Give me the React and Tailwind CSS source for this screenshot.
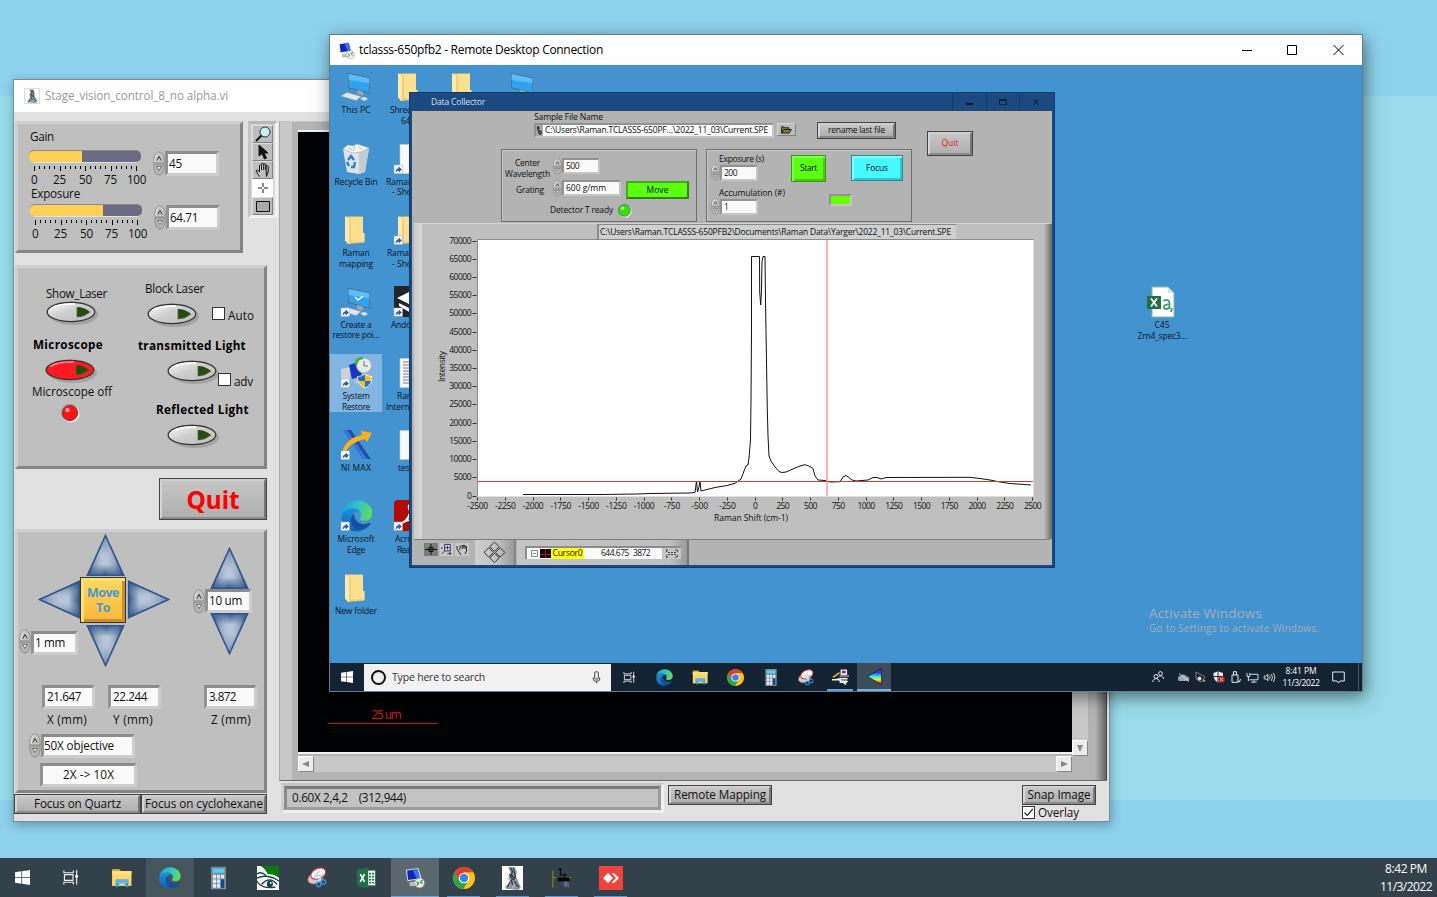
import React, { useLayoutEffect, useRef } from "react";

/* Text set to a known advance width: the tracking is computed from the natural width. */
function T({ w, className = "", children }) {
  const ref = useRef(null);
  useLayoutEffect(() => {
    const el = ref.current;
    el.style.letterSpacing = "0px";
    const n = String(children).length;
    const natural = el.getBoundingClientRect().width;
    el.style.letterSpacing = (w - natural) / n + "px";
  }, [w, children]);
  return (
    <span className={"block shrink-0 " + className}>
      <span ref={ref} className="inline-block whitespace-pre">
        {children}
      </span>
    </span>
  );
}

/* ---------- LabVIEW style controls ---------- */

const Panel = ({ className = "", children }) => (
  <div className={"shrink-0 border-[3px] border-b-[#858585] border-l-[#d0d0d0] border-r-[#858585] border-t-[#d0d0d0] bg-[#bfbfbf] " + className}>
    {children}
  </div>
);

const Field = ({ className = "", children }) => (
  <div className={"flex shrink-0 items-center border-[3px] border-b-[#cdcdcd] border-l-[#929292] border-r-[#cdcdcd] border-t-[#8c8c8c] bg-[#fafafa] " + className}>
    {children}
  </div>
);

const Button = ({ className = "", children }) => (
  <div className={"shrink-0 border border-[#444] bg-[#444] " + className}>
    <div className="flex h-full items-center justify-center border-2 border-b-[#8a8a8a] border-l-[#d6d6d6] border-r-[#777] border-t-[#cfcfcf] bg-linear-to-b from-[#c6c6c6] to-[#b0b0b0]">
      {children}
    </div>
  </div>
);

const Spinner = ({ className = "h-[25px] w-[12px]" }) => (
  <svg viewBox="0 0 12 25" preserveAspectRatio="none" className={"shrink-0 " + className}>
    <path d="M.8 12C.8 5 2.5 1 6 1s5.200 4 5.200 11z" fill="#c4c4c4" stroke="#8a8a8a" />
    <path d="M.8 13.200h10.400C11.200 20 9.500 24 6 24S.8 20 .8 13.200z" fill="#b4b4b4" stroke="#8a8a8a" />
    <path d="M2 11C2 6 3 2.500 5.500 2" fill="none" stroke="#eee" />
    <path d="M3.800 9.500L6 5.500l2.200 4" fill="none" stroke="#333" />
    <path d="M3.500 15.500h5L6 19.500z" fill="#eee" stroke="#555" strokeWidth=".8" />
  </svg>
);

const Switch = ({ red, className = "" }) => (
  <svg viewBox="0 0 54 26" className={"h-[26px] w-[54px] shrink-0 " + className}>
    <defs>
      <linearGradient id="swg" x1="0" y1="0" x2="1" y2="1">
        <stop offset="0" stopColor="#fff" />
        <stop offset=".45" stopColor="#cfcfcf" />
        <stop offset="1" stopColor="#bcbcbc" />
      </linearGradient>
    </defs>
    <ellipse cx="28.500" cy="14.500" rx="24.500" ry="10.500" fill="#9c9c9c" opacity=".8" />
    <ellipse cx="26" cy="12" rx="25" ry="10.800" fill="#a4a4a4" />
    <ellipse cx="26" cy="12" rx="23.800" ry="9.600" fill={red ? "#ff1a22" : "url(#swg)"} stroke="#333" strokeWidth="1.200" />
    <path d="M6 8.500C12 4.500 20 3.800 30 4" fill="none" stroke={red ? "#ff8a8a" : "#fff"} strokeWidth="1.500" />
    <path d="M32 7q7 0 13 5q-6 5-13 5z" fill="#264a12" />
    <path d="M32 7v10M45 12q-6 5-13 5" fill="none" stroke="#4c6e30" strokeWidth=".8" />
  </svg>
);

const Led = ({ color, rim, className }) => (
  <svg viewBox="0 0 20 20" className={"shrink-0 " + className}>
    <circle cx="11" cy="11" r="8.500" fill="#ececec" />
    <circle cx="9.500" cy="9.500" r="8.500" fill="#999" />
    <circle cx="10" cy="10" r="7.500" fill={color} stroke={rim} />
    <circle cx="7.500" cy="7" r="2.200" fill="#fff" opacity=".6" />
  </svg>
);

const Check = ({ on, className = "" }) => (
  <div className={"h-[13px] w-[13px] shrink-0 border border-[#333] bg-white " + className}>
    {on && (
      <svg viewBox="0 0 11 11" className="h-[11px] w-[11px]">
        <path d="M1.500 5.500l2.800 2.800L9.800 2" fill="none" stroke="#222" strokeWidth="1.200" />
      </svg>
    )}
  </div>
);

const TriArrow = ({ dir, className = "" }) => {
  const rot = { up: "", right: "rotate-90", down: "rotate-180", left: "-rotate-90" }[dir];
  return (
    <svg viewBox="0 0 39 43" className={"h-[43px] w-[39px] shrink-0 " + rot + " " + className}>
      <defs>
        <linearGradient id="ta" x1="0" y1="0" x2="0" y2="1">
          <stop offset="0" stopColor="#6f89b0" />
          <stop offset=".5" stopColor="#b7c5d8" />
          <stop offset=".72" stopColor="#bac8da" />
          <stop offset="1" stopColor="#24487e" />
        </linearGradient>
        <linearGradient id="tb" x1="0" y1="0" x2="1" y2="0">
          <stop offset="0" stopColor="#24487e" />
          <stop offset=".48" stopColor="#b7c5d8" stopOpacity="0" />
          <stop offset="1" stopColor="#24487e" />
        </linearGradient>
      </defs>
      <path d="M19.500 0L38.500 42H.5z" fill="url(#ta)" />
      <path d="M19.500 0L38.500 42H.5z" fill="url(#tb)" />
      <path d="M19.500 1.500L37.500 41.300H1.500z" fill="none" stroke="#33558b" strokeWidth="1.600" />
    </svg>
  );
};

const Slider = ({ fill }) => (
  <div className="w-[112px] shrink-0">
    <div className="h-[13px] overflow-hidden rounded-[5px] border-b border-t border-b-[#e2e2e2] border-t-[#8a8a8a] bg-[#6b6b83]">
      <div className={"h-full bg-[#ffd055] " + fill} />
    </div>
    <svg viewBox="0 0 112 6" className="mt-[3px] h-[6px] w-[112px]">
      {Array.from({ length: 21 }, (_, i) => (
        <path key={i} d={`M${5.5 + Math.round(i * 5.1)} 0v${i % 5 ? 3 : 5}`} stroke="#000" />
      ))}
    </svg>
    <div className="-mt-px flex h-[17px] w-[116px] items-center text-[#111]">
      <T w={7} className="ml-[2px] w-[22px]">0</T>
      <T w={13} className="w-[26px]">25</T>
      <T w={13} className="w-[25px]">50</T>
      <T w={13} className="w-[23px]">75</T>
      <T w={19}>100</T>
    </div>
  </div>
);

/* ---------- icons ---------- */

const WinLogo = ({ className }) => (
  <svg viewBox="0 0 16 16" className={className} fill="#fff">
    <path d="M0 2.400L6.800 1.400v6.200H0zM7.600 1.300L16 .1v7.500H7.600zM0 8.400h6.800v6.200L0 13.600zM7.600 8.400H16v7.500l-8.400-1.200z" />
  </svg>
);
const TaskView = ({ className }) => (
  <svg viewBox="0 0 18 18" className={className} fill="none" stroke="#eee" strokeWidth="1.200">
    <path d="M2 1.500v2.500h10V1.500M2 16.500V14h10v2.500M2.600 6h9v6h-9zM15.500 1v15.500" />
    <path d="M14 6.500h3v2.500h-3z" fill="#fff" stroke="none" />
  </svg>
);
const Folder = ({ className }) => (
  <svg viewBox="0 0 20 20" className={className}>
    <path d="M1 2h7l2 2.500h-9z" fill="#e2a422" />
    <path d="M1 3.800h18.500V18H1z" fill="#fdd663" />
    <path d="M1 3.800h18.500v3H1z" fill="#ffe08a" />
    <path d="M4.500 19v-7h12v7h-3v-3.500h-6V19z" fill="#3c97dd" />
    <path d="M4.500 12h12v3.500h-12z" fill="#56b4ee" />
  </svg>
);
const Edge = ({ className }) => (
  <svg viewBox="0 0 24 24" className={className}>
    <defs>
      <linearGradient id="eg1" x1="0" y1=".2" x2="1" y2=".4">
        <stop offset="0" stopColor="#1ba0e0" />
        <stop offset=".55" stopColor="#33c6c4" />
        <stop offset="1" stopColor="#5fdc5a" />
      </linearGradient>
      <linearGradient id="eg2" x1="0" y1="0" x2="0" y2="1">
        <stop offset="0" stopColor="#1b8fdc" />
        <stop offset="1" stopColor="#0f62b8" />
      </linearGradient>
    </defs>
    <path d="M.5 11C1 4.500 6 .4 12 .4 19 .4 23.600 5.300 23.600 10c0 3.600-2.800 5.600-5.800 5.600-2.200 0-3.700-.8-3.700-1.800 0-.8 1-1.200 1-2.900 0-2.200-2.200-4.500-6-4.500C4.500 6.400 1.500 9 .5 11z" fill="url(#eg1)" />
    <path d="M.4 12.500C.9 9 4.500 6.400 9 6.400c2.500 0 4.400 1 5.300 2.300-4-1.200-7 1.600-7 5.500 0 5 4 8.800 8.200 8.500-1.200.6-2.400.9-3.700.9C5 23.600-.2 18.600.4 12.500z" fill="url(#eg2)" />
    <path d="M9.600 10.300c-1.400 1.200-2.300 2.800-2.300 4.600 0 4.500 3.400 8.100 8 7.800 3-.6 5.500-2.700 6.700-4.700.4-.6-.2-1-.8-.7-4.600 2.100-11 .4-11.600-7z" fill="#13509e" />
  </svg>
);
const Calc = ({ className }) => (
  <svg viewBox="0 0 16 24" className={className}>
    <path d="M0 0h16v24H0z" fill="#7b8a94" />
    <path d="M2 2h12v4.500H2z" fill="#4fd0f5" />
    <path d="M2 8.500h3.300v4H2zM6.300 8.500h3.300v4H6.300zM10.700 8.500H14v4h-3.300zM2 13.500h3.300v4H2zM6.300 13.500h3.300v4H6.300zM2 18.500h3.300v4H2zM6.300 18.500h3.300v4H6.300z" fill="#e3eaf0" />
    <path d="M10.700 13.500H14v9h-3.300z" fill="#0b4a96" />
  </svg>
);
const Snip = ({ className }) => (
  <svg viewBox="0 0 24 24" className={className}>
    <ellipse cx="11" cy="12.500" rx="9.500" ry="6.500" transform="rotate(-25 11 12.500)" fill="#c9cdd2" stroke="#a83a3a" />
    <ellipse cx="14" cy="7.500" rx="9" ry="5.800" transform="rotate(-25 14 7.500)" fill="#fafafa" stroke="#c23a3a" strokeWidth="1.300" />
    <path d="M9 12l7-8M12 10l10-1" stroke="#aaa" />
    <path d="M10 9.500l8 7M17 9l-1.500 8" stroke="#cfd6dc" strokeWidth="1.500" />
    <circle cx="14.500" cy="20" r="2.500" fill="none" stroke="#2d8fd5" strokeWidth="1.600" />
    <circle cx="20" cy="17" r="2.500" fill="none" stroke="#2d8fd5" strokeWidth="1.600" />
  </svg>
);
const Chrome = ({ className }) => (
  <svg viewBox="0 0 24 24" className={className}>
    <circle cx="12" cy="12" r="11.800" fill="#fbc116" />
    <path d="M1.800 6.100A11.800 11.800 0 0 1 22.200 6.100H12L7 15z" fill="#e33b2e" />
    <path d="M1.800 6.100A11.800 11.800 0 0 0 11.500 23.800L17 15l-10 0z" fill="#2ca24c" />
    <path d="M22.200 6.100H12l5.100 8.900-5.600 8.800A11.800 11.800 0 0 0 22.200 6.100z" fill="#fbc116" />
    <circle cx="12" cy="12" r="5.800" fill="#fff" />
    <circle cx="12" cy="12" r="4.600" fill="#3f7fe8" />
  </svg>
);
const Rdp = ({ className }) => (
  <svg viewBox="0 0 24 24" className={className}>
    <path d="M1 2l15-2 4 13-17 3z" fill="#d9dde2" />
    <path d="M2.500 3l12.500-1.600 2.800 10.800-14 2.300z" fill="#0f27b4" />
    <path d="M9 2.200l6-.8 2.800 10.800-4 .7z" fill="#3b6df0" />
    <path d="M5 17l10-1 3 5-12 1z" fill="#b9bec4" />
    <circle cx="17.500" cy="18" r="5.800" fill="#e8eee6" stroke="#9aa39a" strokeWidth=".7" />
    <path d="M14 16.500l2.500 2-2.500 2.500M21 14.500l-2.500 2 2.500 2.500" fill="none" stroke="#1f8a2f" strokeWidth="1.300" />
  </svg>
);
const Scope = ({ className }) => (
  <svg viewBox="0 0 20 24" preserveAspectRatio="none" className={className}>
    <path d="M0 0h20v24H0z" fill="#fff" />
    <path d="M6 1l6 0 2 4-1 5 2 4 3 8-3 2-7-1-4 0-1-2 5-5-2-5 2-4z" fill="#8b96a0" />
    <path d="M8 2l2 3-1 4 3 3M11 2l1 5 1 3-2 4M7 8l3 5-3 4-2 4M12 15l2 4 2 2M9 14l1 5" stroke="#2a3238" strokeWidth="1.100" fill="none" />
    <path d="M5 12l3 4M13 3l1 5M12 18l-2 4" stroke="#b4c4d0" />
  </svg>
);
const Excel = ({ className }) => (
  <svg viewBox="0 0 22 24" className={className}>
    <path d="M10 3h11.500v18H10z" fill="#fff" stroke="#1f7244" />
    <path d="M14 6h2.500v2H14zM17.500 6H20v2h-2.500zM14 9.500h2.500v2H14zM17.500 9.500H20v2h-2.500zM14 13h2.500v2H14zM17.500 13H20v2h-2.500zM14 16.500h2.500v2H14zM17.500 16.500H20v2h-2.500z" fill="#1f7244" />
    <path d="M0 2.500L13 0v24L0 21.500z" fill="#1f7244" />
    <path d="M3.800 7.500l5 9M8.800 7.500l-5 9" stroke="#fff" strokeWidth="1.900" />
  </svg>
);
const EyeApp = ({ className }) => (
  <svg viewBox="0 0 24 24" preserveAspectRatio="none" className={className}>
    <path d="M0 0h24v24H0z" fill="#fff" />
    <path d="M4 0h20v12C20 8.500 15 7.500 12 8.500 10 5 8 2 4 0z" fill="#0a7a0a" />
    <path d="M0 8c3-2 7-1 10 1.500M0 12c7-3 17-2 24 3M5 18.500c5-6 12-6 17 0M0 15c2 5 10 8 20 6" fill="none" stroke="#16434a" strokeWidth="1.400" />
    <circle cx="14" cy="18" r="3.300" fill="#16434a" />
    <circle cx="15" cy="17" r="1" fill="#fff" />
  </svg>
);
const ProbeApp = ({ className }) => (
  <svg viewBox="0 0 24 24" className={className}>
    <path d="M1 4v20M1 12h4M17 12h6" stroke="#80801a" strokeWidth="1.500" />
    <path d="M10 1v8h7M8.500 3L10 .8 11.500 3M15 7.500L17 9l-2 1.500" fill="none" stroke="#000" strokeWidth="1.200" />
    <path d="M7 12h14v4.500H7z" fill="#000" />
    <path d="M13 17v5" stroke="#7a1fd0" strokeWidth="1.500" />
    <path d="M15.500 17v6" stroke="#2f8fe0" strokeWidth="1.500" />
    <path d="M17.500 17v6" stroke="#18c040" strokeWidth="1.500" />
    <path d="M19.500 17v7" stroke="#e0209a" strokeWidth="1.500" />
  </svg>
);
const AnyDesk = ({ className }) => (
  <svg viewBox="0 0 24 24" className={className}>
    <path d="M0 0h24v24H0z" fill="#ef443b" />
    <path d="M9 7l5 5-5 5-5-5zM12.500 7L15 7l5 5-5 5h-2.500l4.500-5z" fill="#fff" />
  </svg>
);

/* desktop icons, all on a 32 x 32 grid */
const Shortcut = () => (
  <g>
    <path d="M1 22h8.500v8.500H1z" fill="#fff" stroke="#9ab" strokeWidth=".5" />
    <path d="M3 29c0-2.500 1-3.500 3-3.500V24l2.500 2.500L6 29v-1.500c-1.300 0-2 .3-3 1.500z" fill="#2a5db0" stroke="#2a5db0" strokeWidth=".6" />
  </g>
);
const DIcon = ({ kind, link }) => (
  <svg viewBox="0 0 32 32" className="h-[32px] w-[32px]">
    {kind === "pc" && (
      <g>
        <path d="M8 2l22 4.500v16L8 17z" fill="#5a6670" />
        <path d="M8.700 3l20.600 4.200v14.300L8.700 16.300z" fill="#2fa3f2" />
        <path d="M8.700 3l20.600 4.200v5L8.700 9z" fill="#5cbcfa" />
        <path d="M17 19l6 1.500v4l-6-1.500z" fill="#9aa6b0" />
        <path d="M1 25l6-3.500 14 4-5 4z" fill="#e3e7ea" stroke="#9aa6b0" strokeWidth=".6" />
        <path d="M20 27l5-1 3 2-4 2z" fill="#e3e7ea" />
        {link && <path d="M15 11l3 3 5-4" fill="none" stroke="#fff" strokeWidth="1.500" />}
      </g>
    )}
    {kind === "bin" && (
      <g>
        <path d="M3 6l26-1-4 24-6 2-12-2z" fill="#dde3e8" />
        <path d="M19 8l10-3-4 24-6 2z" fill="#c3ccd4" />
        <path d="M3 6l5-4 5 1 4-2 6 2 6 2-8 4-8 1z" fill="#f5f7f8" stroke="#a9b2ba" strokeWidth=".7" />
        <path d="M8 5l4 2M15 3l-2 5M19 4l3 3" stroke="#a9b2ba" />
        <path d="M8 17l3-4 3 4M15 19l-1 5h-3M9 23l-2-4" fill="none" stroke="#1f80d4" strokeWidth="2.300" />
      </g>
    )}
    {kind === "folder" && (
      <g>
        <path d="M5 2.500h18v17h1.500v9L7 30z" fill="#f3cf6c" />
        <path d="M10 3h13v16h1.500v8.500H10z" fill="#fbe08f" />
        <path d="M5 2.500l5 2.500v25l-5-3z" fill="#fbe9ae" />
        <path d="M10 5v24" stroke="#dcb24c" strokeWidth=".8" />
      </g>
    )}
    {kind === "doc" && <path d="M7 1.500h22v29H7z" fill="#f9f9fb" stroke="#c5ccd4" strokeWidth=".6" />}
    {kind === "lines" && (
      <g>
        <path d="M7 1.500h22v29H7z" fill="#f9f9fb" stroke="#c5ccd4" strokeWidth=".6" />
        <path d="M10 5h16M10 8h16M10 11h16M10 14h16M10 17h16M10 20h16M10 23h16M10 26h16" stroke="#777" />
      </g>
    )}
    {kind === "andor" && (
      <g>
        <path d="M1 0h31v31H1z" fill="#23242c" />
        <path d="M4 12L18 5l14 6-14 8zM6 17l12 6 14-6v3l-14 7L6 20z" fill="#fff" />
      </g>
    )}
    {kind === "acro" && (
      <g>
        <rect x="1" y="0" width="31" height="31" rx="4" fill="#b30b00" />
        <path d="M9 23c5-2 9-9 9-16 0-3-3-3-2 1 1 6 6 11 12 11-6-1-14 1-19 4z" fill="none" stroke="#fff" strokeWidth="2" />
      </g>
    )}
    {kind === "restore" && (
      <g>
        <path d="M1 12l9-2v14l-9-3z" fill="#cdd3d8" />
        <path d="M9 8l9-3 4 14-10 3z" fill="#1736c4" />
        <path d="M13 23l8-2 3 4-9 2z" fill="#b9c0c8" />
        <circle cx="24" cy="8.500" r="7.500" fill="#e7ece8" stroke="#aab" />
        <path d="M24 4v5h4" fill="none" stroke="#777" />
        <path d="M16 8c0-5 3-7 7-7" fill="none" stroke="#35b535" strokeWidth="2.500" />
        <path d="M25 17v7h-7c-.5-1.500-.5-3-.5-4.500 3 0 5-1 7.500-2.500zM25 24h6.500c-1 3-3 5-6.500 7z" fill="#1f6fd0" />
        <path d="M25 17c2.500 1.500 4.500 2.500 7 2.500 0 1.500 0 3-.5 4.500H25zM18 24h7v7c-3.500-1.500-6-4-7-7z" fill="#f7c21e" />
        <path d="M25 17c-2.500 1.500-4.500 2.500-7.500 2.500 0 6 2.500 9 7.500 11.500 5-2.500 7-5.500 7-11.500-2.500 0-4.500-1-7-2.500z" fill="none" stroke="#fff" strokeWidth=".8" />
      </g>
    )}
    {kind === "nimax" && (
      <g>
        <path d="M3 1h8l20 29h-8z" fill="#1e4fb0" />
        <path d="M3 1h4l20 29h-4z" fill="#3c74d8" />
        <path d="M2 23C5 13 12 8 22 6l-1-4 11 2-5 9-2-3C16 12 9 16 5 24z" fill="#fbb11a" />
      </g>
    )}
    {kind === "csv" && (
      <g>
        <path d="M6 1h16l6 6v24H6z" fill="#fff" stroke="#7dbb98" />
        <path d="M22 1v6h6z" fill="#cfe5d8" />
        <path d="M1 10h14v13H1z" fill="#1f7244" />
        <path d="M5 12.500l6 8M11 12.500l-6 8" stroke="#fff" strokeWidth="1.800" />
        <path d="M17.500 15c3-2 6-1 6 2v6M23.500 18.500c-7-.5-7 4.500-3.500 4.500 2 0 3.500-1.500 3.500-3M26 22l-1 4" fill="none" stroke="#3fa06a" strokeWidth="1.800" />
      </g>
    )}
    {link && <Shortcut />}
  </svg>
);

const DesktopCell = ({ icon, lines, selected }) => (
  <div className={"flex h-[58px] w-[52px] shrink-0 flex-col items-center " + (selected ? "bg-[#83b5e2]" : "")}>
    <div className="flex h-[37px] shrink-0 items-center pt-px">{icon}</div>
    <div className="flex flex-col items-center text-[8.500px] leading-[10.500px] text-[#0c1420]">
      {lines.map(([t, w], i) => (
        <T key={i} w={w}>{t}</T>
      ))}
    </div>
  </div>
);

const EdgeDesktop = () => (
  <svg viewBox="0 0 32 32" className="h-[32px] w-[32px]">
    <svg x="0" y="0" width="34" height="32" viewBox="0 0 24 24">
      <Edge />
    </svg>
    <Shortcut />
  </svg>
);

const HalfCell = ({ icon, l1, l2 }) => (
  <div className="h-[71.570px] w-[50px] shrink-0 overflow-hidden">
    <div className="flex h-[37px] shrink-0 items-center pl-[7px] pt-px">{icon}</div>
    <div className="flex flex-col text-[8.500px] leading-[10.500px] text-[#0c1420]">
      {l1}
      {l2}
    </div>
  </div>
);

/* ---------- spectrum chart ---------- */

const CURVE =
  "523,494.500 600,494.500 637,494 650,493.500 690,493 695,492.500 696.500,481 697.500,492 699,487 700,481 701,491 715,487.500 727,485.500 735,483.300 741,479 744,471 746,466 748,465 749,458 750.500,440 751,400 751.500,330 751.500,256.500 759.500,256.500 759.700,292 760.700,305 761.500,290 762,262 763,256.500 765,256.500 765.500,300 766.500,362 767.300,410 768,436 769,456 771,461 775,467 779,471.500 782,472.500 786,472 795,468 800,466 805,464.700 810,466.500 813,468.500 815,476 818,480 825,480.500 830,482 840,481.700 843,477 846,475.500 849,477.500 852,480 856,481 868,480 873,477.500 877,477.500 881,479 886,477.500 970,477.300 980,478.500 990,480 1000,482 1010,483.500 1031,485";

const Chart = () => (
  <svg viewBox="430 239 614 288" className="block h-[288px] w-[614px] overflow-visible font-['Open_Sans',sans-serif]" fontSize="8.500" fill="#111">
    <path d="M477.500 239.500h556v257h-556z" fill="#fff" />
    <path d="M477.500 496V239.500h556" fill="none" stroke="#8a8a8a" />
    {Array.from({ length: 15 }, (_, i) => {
      const y = 495.5 - i * 18.214;
      const label = String(i * 5000);
      return (
        <g key={i}>
          <text x={471.5 - label.length * 4.45} y={y + 3} textLength={label.length * 4.45}>{label}</text>
          <path d={`M472.500 ${Math.round(y) + 0.5}h4`} stroke="#333" />
        </g>
      );
    })}
    {Array.from({ length: 21 }, (_, i) => {
      const x = 477.7 + i * 27.75;
      const label = String(-2500 + i * 250);
      const w = label.length * 4.4 - (label[0] === "-" ? 1 : 0);
      return (
        <g key={i}>
          <text x={x - w / 2} y="508.8" textLength={w}>{label}</text>
          <path d={`M${Math.floor(x) + 0.5} 497.500v3`} stroke="#333" />
        </g>
      );
    })}
    <text x="714" y="520.800" textLength="74">Raman Shift (cm-1)</text>
    <text transform="translate(445 382) rotate(-90)" textLength="31">Intensity</text>
    <polyline points={CURVE} fill="none" stroke="#111" strokeWidth="1" />
    <path d="M827 240v256" stroke="#ffb0b0" strokeWidth="2" />
    <path d="M478 481h555v1h-555z" fill="#c23c3c" />
  </svg>
);

/* ---------- Data Collector window ---------- */

const SmallField = ({ className = "", children }) => (
  <div className={"flex shrink-0 items-center border-2 border-b-[#c6c6c6] border-l-[#929292] border-r-[#c6c6c6] border-t-[#929292] bg-[#fafafa] pl-[2px] " + className}>
    {children}
  </div>
);
const SmallSpin = () => <Spinner className="h-[17px] w-[9px]" />;

const DataCollector = () => (
  <div className="absolute left-[79px] top-[57px] flex h-[476px] w-[646px] flex-col border border-[#123a68] bg-[#1c4a80] font-['Open_Sans',sans-serif] text-[8.500px] text-[#111]">
    <div className="flex h-[18px] shrink-0 items-center pl-[21px] text-[#cfe0f0]">
      <T w={54} className="w-[521px]">Data Collector</T>
      <div className="flex h-full w-[34px] items-center justify-center border-l border-[#143a66]">
        <div className="mt-[3px] h-[2px] w-[7px] bg-[#06121f]" />
      </div>
      <div className="flex h-full w-[33px] items-center justify-center border-l border-[#143a66]">
        <div className="h-[6px] w-[8px] border border-t-2 border-[#0b2340]" />
      </div>
      <div className="flex h-full w-[33px] items-center justify-center border-l border-[#143a66]">
        <svg viewBox="0 0 7 7" className="h-[6px] w-[6px]"><path d="M.5.5l6 6M6.500.5l-6 6" stroke="#0b2340" strokeWidth="1.300" /></svg>
      </div>
    </div>
    <div className="mx-[2px] mb-[2px] flex min-h-0 flex-1 flex-col bg-[#b3b3b3]">
      <div className="flex h-[112px] shrink-0">
        <div className="w-[500px] shrink-0">
          <div className="flex h-[38px]">
            <div className="ml-[122px] w-[240px]">
              <T w={69} className="h-[12px] leading-[12px]">Sample File Name</T>
              <div className="flex h-[15px] items-center border-2 border-b-[#c6c6c6] border-l-[#929292] border-r-[#c6c6c6] border-t-[#929292] bg-[#fafafa]">
                <div className="flex h-full w-[7px] items-center justify-center bg-[#a8a8a8]">
                  <svg viewBox="0 0 5 9" className="h-[9px] w-[5px]"><path d="M1 0v5h3v3H2V5M0 2h3" fill="none" stroke="#111" /></svg>
                </div>
                <T w={223} className="ml-[2px]">C:\Users\Raman.TCLASSS-650PF...\2022_11_03\Current.SPE</T>
              </div>
            </div>
            <div className="ml-[3px] mt-[12px] flex h-[13px] w-[19px] items-center justify-center border border-b-[#808080] border-l-[#d8d8d8] border-r-[#808080] border-t-[#d8d8d8] bg-[#bcbcbc]">
              <svg viewBox="0 0 12 9" className="h-[8px] w-[11px]"><path d="M.5 8V1h3l1 1h4v2M.5 8l2.500-4h8.500L9 8z" fill="#8a8420" stroke="#111" /></svg>
            </div>
            <div className="ml-[21px] mt-[11px]">
              <Button className="h-[17px] w-[79px]"><T w={57}>rename last file</T></Button>
            </div>
          </div>
          <div className="ml-[89px] flex h-[73px]">
            <div className="w-[196px] border border-[#6e6e6e] pt-[8px] shadow-[inset_1px_1px_0_#c8c8c8]">
              <div className="flex h-[22px] items-start">
                <div className="w-[51px] text-center leading-[10.500px]">
                  <T w={25}>Center</T>
                  <T w={45}>Wavelength</T>
                </div>
                <SmallSpin />
                <SmallField className="h-[16px] w-[38px]"><T w={13}>500</T></SmallField>
              </div>
              <div className="flex h-[22px] items-start">
                <T w={28} className="ml-[14px] mt-[4px] w-[37px]">Grating</T>
                <SmallSpin />
                <SmallField className="h-[16px] w-[59px]"><T w={40}>600 g/mm</T></SmallField>
                <div className="ml-[5px] mt-[1px] flex h-[18px] w-[63px] items-center justify-center border-2 border-b-[#2a8a08] border-l-[#44a820] border-r-[#2a8a08] border-t-[#44a820] bg-[#5cff10]">
                  <T w={22}>Move</T>
                </div>
              </div>
              <div className="flex h-[16px] items-center">
                <T w={63} className="ml-[48px]">Detector T ready</T>
                <Led color="#3be010" rim="#2aa00c" className="ml-[4px] h-[15px] w-[15px]" />
              </div>
            </div>
            <div className="ml-[9px] flex w-[206px] border border-[#6e6e6e] pl-[4px] shadow-[inset_1px_1px_0_#c8c8c8]">
              <div className="w-[78px] pt-[3px]">
                <T w={45} className="ml-[8px] h-[11px] leading-[11px]">Exposure (s)</T>
                <div className="flex">
                  <SmallSpin />
                  <SmallField className="mt-px h-[16px] w-[38px]"><T w={13}>200</T></SmallField>
                </div>
                <T w={66} className="ml-[8px] mt-[6px] h-[11px] leading-[11px]">Accumulation (#)</T>
                <div className="flex">
                  <SmallSpin />
                  <SmallField className="mt-px h-[16px] w-[38px]"><T w={4}>1</T></SmallField>
                </div>
              </div>
              <div className="ml-[2px] pt-[5px]">
                <div className="flex">
                  <div className="flex h-[27px] w-[35px] items-center justify-center border border-[#3a9a18] bg-[#5cff10] shadow-[inset_2px_2px_0_#7cff48,inset_-2px_-2px_0_#46c818]">
                    <T w={17}>Start</T>
                  </div>
                  <div className="ml-[25px] flex h-[26px] w-[52px] items-center justify-center border border-[#2a8a94] bg-[#48f8ff] shadow-[inset_2px_2px_0_#84fcff,inset_-2px_-2px_0_#30c4cc]">
                    <T w={22}>Focus</T>
                  </div>
                </div>
                <div className="ml-[38px] mt-[12px] h-[12px] w-[23px] border-2 border-b-[#c6c6c6] border-l-[#929292] border-r-[#c6c6c6] border-t-[#929292] bg-[#66ff00]" />
              </div>
            </div>
          </div>
        </div>
        <Button className="ml-[15px] mt-[20px] h-[25px] w-[46px]"><T w={17} className="text-[#d82020]">Quit</T></Button>
      </div>
      <div className="mx-[2px] flex h-[317px] shrink-0 border-b border-t border-b-[#7c7c7c] border-t-[#d4d4d4] bg-[#bfbfbf]">
        <div className="w-[8px] shrink-0 bg-linear-to-r from-[#cacaca] to-[#d8d8d8]" />
        <div className="ml-[8px] w-[614px]">
          <div className="ml-[167px] flex h-[15px] w-[359px] items-center border-l-2 border-t border-[#8a8a8a] bg-[#d0d0d0] pl-px">
            <T w={351}>C:\Users\Raman.TCLASSS-650PFB2\Documents\Raman Data\Yarger\2022_11_03\Current.SPE</T>
          </div>
          <Chart />
        </div>
        <div className="ml-auto w-[8px] shrink-0 bg-linear-to-r from-[#bfbfbf] to-[#6a6a6a]" />
      </div>
      <div className="flex min-h-0 flex-1">
        <div className="flex w-[63px] items-start gap-[2px] pl-[12px] pt-[3px]">
          <svg viewBox="0 0 14 13" className="h-[13px] w-[14px] bg-[#7a7a7a]"><path d="M7 1v11M1 6.500h12M5 4.500h4v4H5z" fill="none" stroke="#111" /><path d="M2 2h2" stroke="#3d3" /></svg>
          <svg viewBox="0 0 14 13" className="h-[13px] w-[13px] bg-[#c8c8c8]"><path d="M5 1h6v7H5z" fill="#dde" stroke="#224" /><path d="M5 8L2 11M8 2.500v4M6 4.500h4M8 11h4M11 9v3M2 4v2" stroke="#224" /></svg>
          <svg viewBox="0 0 14 13" className="h-[13px] w-[14px] bg-[#c8c8c8]"><path d="M2 3v3l4 6M5 7V2.500M7 5V2.500h1V6M8 2.500h2V6M10 3.500h1.500V8L10 11" fill="none" stroke="#222" /></svg>
        </div>
        <div className="flex w-[41px] justify-center border-r-2 border-[#858585] bg-linear-to-r from-[#cfcfcf] via-[#bfbfbf] via-60% to-[#999]">
          <svg viewBox="0 0 23 23" className="mt-px h-[23px] w-[23px]" fill="none" stroke="#333">
            <path d="M11.500 1l4.700 4.700-4.700 4.700-4.700-4.700zM11.500 12.200l4.700 4.700-4.700 4.700-4.700-4.700zM5.800 6.700l4.700 4.700-4.700 4.700L1 11.400zM17.200 6.700l4.700 4.700-4.700 4.700-4.700-4.700z" />
          </svg>
        </div>
        <div className="ml-px w-[172px] border-r-2 border-[#777] bg-linear-to-r from-[#c4c4c4] via-[#bfbfbf] via-90% to-[#999] pl-[8px] pt-[6px]">
          <div className="flex h-[13px] w-[156px] items-center border-l-2 border-t-2 border-[#8c8c8c] bg-[#fafafa]">
            <svg viewBox="0 0 7 7" className="ml-[4px] h-[7px] w-[7px] shrink-0"><path d="M.5.5h6v6h-6zM2 3.500h3" fill="none" stroke="#888" /></svg>
            <svg viewBox="0 0 11 9" className="ml-[2px] h-[9px] w-[11px] shrink-0"><path d="M0 0h11v9H0z" fill="#1a0505" /><path d="M5.500 0v9M0 5.500h11" stroke="#a01818" /></svg>
            <div className="flex h-full w-[33px] shrink-0 items-center justify-center bg-[#ffff10]"><T w={30}>Cursor0</T></div>
            <T w={28} className="ml-[17px]">644.675</T>
            <T w={17} className="ml-[4px] w-[29px]">3872</T>
            <div className="flex h-full min-w-0 flex-1 items-center justify-center bg-[#c4c4c4]">
              <svg viewBox="0 0 12 9" className="h-[9px] w-[12px]"><path d="M0 1h3M9 1h3M0 8h3M9 8h3M.5 1v2M11.500 1v2M.5 6v2M11.500 6v2M2 3.500h8M2 5.500h8" stroke="#444" strokeDasharray="2 1" /></svg>
            </div>
          </div>
        </div>
      </div>
    </div>
  </div>
);

/* ---------- remote session ---------- */

const COL1 = [
  { icon: <DIcon kind="pc" />, lines: [["This PC", 29]] },
  { icon: <DIcon kind="bin" />, lines: [["Recycle Bin", 43]] },
  { icon: <DIcon kind="folder" />, lines: [["Raman", 27], ["mapping", 34]] },
  { icon: <DIcon kind="pc" link />, lines: [["Create a", 31], ["restore poi...", 47]] },
  { icon: <DIcon kind="restore" link />, lines: [["System", 27], ["Restore", 28]], selected: true },
  { icon: <DIcon kind="nimax" link />, lines: [["NI MAX", 30]] },
  { icon: <EdgeDesktop />, lines: [["Microsoft", 37], ["Edge", 18]] },
  { icon: <DIcon kind="folder" />, lines: [["New folder", 42]] },
];

const RTask = ({ className = "w-[35.300px]", children }) => (
  <div className={"flex h-full shrink-0 items-center justify-center " + className}>{children}</div>
);

const RemoteWindow = () => (
  <div className="absolute left-[329px] top-[34px] h-[658px] w-[1034px] border border-[#5d7f91] bg-white shadow-[2px_5px_16px_rgba(0,0,0,0.5)]">
    <div className="flex h-[30px] items-center">
      <Rdp className="ml-[8px] h-[17px] w-[17px]" />
      <T w={244} className="ml-[4px] text-[12px] text-black">tclasss-650pfb2 - Remote Desktop Connection</T>
      <svg viewBox="0 0 110 12" className="ml-auto mr-[15px] h-[12px] w-[110px]" fill="none" stroke="#000">
        <path d="M5 6.500h10M50.500 1.500h9v9h-9zM96.500 1l10 10M106.500 1l-10 10" />
      </svg>
    </div>
    <div className="flex h-[626px] flex-col bg-[#4393d1]">
      <div className="flex h-[598px] overflow-hidden pt-[3px]">
        <div className="flex w-[54px] shrink-0 flex-col gap-[13.570px]">
          {COL1.map((c, i) => (
            <DesktopCell key={i} {...c} />
          ))}
        </div>
        <div className="flex w-[54px] shrink-0 flex-col pl-[2px]">
          <HalfCell icon={<DIcon kind="folder" />} l1={<T w={22} className="ml-[4px]">Shred</T>} l2={<T w={9} className="ml-[15px]">64</T>} />
          <HalfCell icon={<DIcon kind="doc" link />} l1={<T w={27}>Raman</T>} l2={<T w={20} className="ml-[6px]">- Sho</T>} />
          <HalfCell icon={<DIcon kind="folder" link />} l1={<T w={27} className="ml-px">Raman</T>} l2={<T w={20} className="ml-[6px]">- Sho</T>} />
          <HalfCell icon={<DIcon kind="andor" link />} l1={<T w={23} className="ml-[5px]">Andor</T>} />
          <HalfCell icon={<DIcon kind="lines" />} l1={<T w={15} className="ml-[11px]">Ran</T>} l2={<T w={28}>Interna</T>} />
          <HalfCell icon={<DIcon kind="doc" />} l1={<T w={14} className="ml-[12px]">test</T>} />
          <HalfCell icon={<DIcon kind="acro" link />} l1={<T w={17} className="ml-[9px]">Acro</T>} l2={<T w={17} className="ml-[11px]">Read</T>} />
        </div>
        <div className="flex shrink-0 pt-[3px]">
          <div className="ml-[9px]"><DIcon kind="folder" /></div>
          <div className="ml-[24px]"><DIcon kind="pc" /></div>
        </div>
      </div>
      <div className="flex h-[28px] shrink-0 items-stretch bg-[#132331]">
        <RTask className="w-[34px]"><WinLogo className="h-[12px] w-[12px]" /></RTask>
        <div className="mt-px flex w-[247px] items-center bg-[#f2f2f2]">
          <div className="ml-[7px] h-[15px] w-[15px] rounded-full border-2 border-[#111]" />
          <T w={93} className="ml-[6px] text-[10.500px] text-[#333]">Type here to search</T>
          <svg viewBox="0 0 10 14" className="ml-auto mr-[10px] h-[13px] w-[9px]" fill="none" stroke="#333">
            <rect x="3" y=".7" width="4" height="8" rx="1" />
            <path d="M1.500 7v3q0 1 3.500 1t3.500-1V7M5 11v2.500" />
          </svg>
        </div>
        <RTask><TaskView className="h-[13px] w-[14px]" /></RTask>
        <RTask className="w-[36px]"><Edge className="h-[17px] w-[17px]" /></RTask>
        <RTask><Folder className="h-[16px] w-[16px]" /></RTask>
        <RTask><Chrome className="h-[17px] w-[17px]" /></RTask>
        <RTask><Calc className="h-[17px] w-[12px]" /></RTask>
        <RTask><Snip className="h-[17px] w-[17px]" /></RTask>
        <div className="ml-[4px] w-[26px] border-b-2 border-[#6d9fd6]">
          <RTask className="w-full">
            <svg viewBox="0 0 18 18" className="h-[17px] w-[17px]">
              <path d="M9 1.500h7v6H9zM8 10h8v6H8z" fill="#e4e4e4" />
              <path d="M10.500 3h4v2.500h-4z" fill="#7a2f9a" />
              <path d="M8 8.500h10M5 11.500h12M10 14h7" stroke="#f0f0f0" />
              <path d="M7 10h10M9 12.700h8" stroke="#333" />
              <path d="M1 10l7-5" stroke="#e8b830" strokeWidth="1.600" />
              <path d="M0 12.500h8l7 5" fill="none" stroke="#f4f4f4" strokeWidth="1.500" />
            </svg>
          </RTask>
        </div>
        <div className="ml-[4px] w-[34px] border-b-2 border-[#7fb0e0] bg-[#3d4c5b]">
          <RTask className="w-full">
            <svg viewBox="0 0 16 18" className="h-[17px] w-[15px]">
              <defs>
                <linearGradient id="prism" x1="0" y1="0" x2="0" y2="1">
                  <stop offset="0" stopColor="#a01890" />
                  <stop offset=".25" stopColor="#3040e0" />
                  <stop offset=".5" stopColor="#30e8e8" />
                  <stop offset=".7" stopColor="#e8f030" />
                  <stop offset="1" stopColor="#d01010" />
                </linearGradient>
              </defs>
              <path d="M15.500.5v17L.5 9z" fill="url(#prism)" stroke="#111" strokeWidth=".7" />
            </svg>
          </RTask>
        </div>
        <div className="ml-auto flex items-center text-[8.500px] text-white">
          <svg viewBox="0 0 12 12" className="h-[12px] w-[12px]" fill="none" stroke="#e8e8e8"><circle cx="4" cy="5.500" r="2" /><circle cx="8.500" cy="2.500" r="1.900" /><path d="M.8 11c0-4.500 6.500-4.500 6.500 0M7 5.500c2-1.500 4.500 0 4.500 2.500" /></svg>
          <svg viewBox="0 0 12 9" className="ml-[14px] h-[9px] w-[12px]"><path d="M2 8a2.500 2.500 0 0 1 .5-5 3.500 3.500 0 0 1 6 .5A2.300 2.300 0 0 1 9.500 8z" fill="#9aa4ac" /><path d="M1 .5l10 8" stroke="#dde" /></svg>
          <svg viewBox="0 0 12 12" className="ml-[5px] h-[12px] w-[12px]"><path d="M1 1l9 5-4 5-5-3z" fill="#1a1a1a" stroke="#999" strokeWidth=".8" /><circle cx="4.500" cy="7.500" r="2" fill="#ddd" /><path d="M8 8l3 2-3 1z" fill="#d09a60" /></svg>
          <svg viewBox="0 0 12 12" className="ml-[6px] h-[12px] w-[12px]"><path d="M5 .5L10 2c0 5-1 7-5 9.500C1 9 .5 7 .5 2z" fill="#f2f2f2" /><path d="M5 1v10M.5 5.500h9" stroke="#132331" /><circle cx="8.500" cy="8.500" r="3.300" fill="#d32020" /><path d="M7.200 7.200l2.600 2.600M9.800 7.200L7.200 9.800" stroke="#fff" /></svg>
          <svg viewBox="0 0 10 12" className="ml-[6px] h-[12px] w-[10px]" fill="none" stroke="#e8e8e8"><path d="M2.500 4V.7h3V4M1 4h6v7.300H1zM7 10l1.500 1 1-3" /></svg>
          <svg viewBox="0 0 13 12" className="ml-[5px] h-[11px] w-[13px]" fill="none" stroke="#e8e8e8"><path d="M4 2.500h8.500v6H3M8 9v2M5 11h6M.5 1v4h3V1M2 5v5" /></svg>
          <svg viewBox="0 0 13 12" className="ml-[4px] h-[11px] w-[13px]" fill="none" stroke="#e8e8e8"><path d="M.7 4.500h2l2-2v7l-2-2h-2zM6.500 4q1.500 2 0 4M8.500 2.500q2.500 3.500 0 7M10.500 1q3.500 5 0 10" /></svg>
          <div className="ml-[6px] flex w-[38px] flex-col items-center leading-[12px]">
            <T w={31}>8:41 PM</T>
            <T w={37}>11/3/2022</T>
          </div>
          <svg viewBox="0 0 13 13" className="ml-[12px] mr-[13px] h-[13px] w-[13px]" fill="none" stroke="#e8e8e8"><path d="M.7 1h11.600v9H8l-1.500 2L5 10H.7z" /></svg>
          <div className="mr-[3px] h-[28px] w-px bg-[#4a5966]" />
        </div>
      </div>
    </div>
    <DataCollector />
    <div className="absolute left-[806px] top-[251px] flex w-[52px] flex-col items-center text-[8.500px] leading-[11px] text-[#0c1420]">
      <DIcon kind="csv" />
      <T w={15} className="mt-px">C45</T>
      <T w={49}>Zrn4_spec3...</T>
    </div>
    <div className="absolute left-[819px] top-[570px] text-[#a9aeb5]">
      <T w={113} className="text-[13.500px] leading-[16px]">Activate Windows</T>
      <T w={170} className="text-[10px] font-medium leading-[15px]">Go to Settings to activate Windows.</T>
    </div>
  </div>
);

/* ---------- stage control window ---------- */

const ToolCell = ({ on, children }) => (
  <div className={"flex h-[18px] w-[21px] items-center justify-center border " + (on ? "border-white bg-white" : "border-b-[#808080] border-l-[#dedede] border-r-[#808080] border-t-[#dedede] bg-[#bdbdbd]")}>
    <svg viewBox="0 0 16 16" className="h-[16px] w-[16px] shrink-0" fill="none" stroke="#111">{children}</svg>
  </div>
);

const GaugeRow = ({ fill, value, w }) => (
  <div className="flex items-start">
    <Slider fill={fill} />
    <Spinner className="ml-[12px] mt-px h-[25px] w-[12px]" />
    <Field className="mt-px h-[25px] w-[54px] pl-[1px]"><T w={w}>{value}</T></Field>
  </div>
);

const StageWindow = () => (
  <div className="absolute left-[13px] top-[79px] flex h-[743px] w-[1097px] flex-col border border-[#7790a0] bg-[#e1e1e1] text-[11.700px] text-[#111] shadow-[1px_3px_10px_rgba(0,0,0,0.3)]">
    <div className="flex h-[32px] shrink-0 items-center bg-white">
      <Scope className="ml-[10px] h-[16px] w-[16px] border border-[#ddd]" />
      <T w={183} className="ml-[5px] text-[#999]">Stage_vision_control_8_no alpha.vi</T>
    </div>
    <div className="flex min-h-0 flex-1">
      <div className="w-[265px] shrink-0 pl-px pt-[9px]">
        <div className="flex items-start">
          <Panel className="h-[132px] w-[228px] pl-[11px] pt-[4px]">
            <T w={24} className="ml-px h-[16px] leading-[16px]">Gain</T>
            <div className="mt-[6px]"><GaugeRow fill="w-[53px]" value="45" w={13} /></div>
            <T w={49} className="-mt-[2px] ml-[2px] h-[18px] leading-[14px]">Exposure</T>
            <div className="ml-px"><GaugeRow fill="w-[73px]" value="64.71" w={28} /></div>
          </Panel>
          <div className="ml-[5px] h-[97px] w-[30px] border-[3px] border-b-[#f2f2f2] border-l-[#c4c4c4] border-r-[#f2f2f2] border-t-[#b8b8b8] bg-[#d8d8d8] pl-[1px] pt-px">
            <ToolCell><circle cx="10" cy="6" r="5" fill="#c8eeee" stroke="#234" /><path d="M6.500 9.500L1 15" strokeWidth="2" /></ToolCell>
            <ToolCell><path d="M4 1v11l3-2.500L9.500 15l2-1L9 9h4z" fill="#111" /></ToolCell>
            <ToolCell><path d="M4.500 14.500L1 9l1.500-1L4.500 10V3.500q1-1.500 2 0V8M6.500 3V1.800q1-1.200 2.200 0V8M8.700 2.500q1-1.200 2.200 0V8M10.900 4q1.500-1.200 2.300.5V10l-1.700 4.500z" fill="#c8c8c8" /></ToolCell>
            <ToolCell on><path d="M8 3v4M8 9v4M3 8h4M9 8h4" /></ToolCell>
            <ToolCell><path d="M1.500 3.500h13v10h-13z" fill="#aaa" /></ToolCell>
          </div>
        </div>

        <Panel className="mt-[12px] flex h-[204px] w-[252px]">
          <div className="w-[108px] shrink-0 pl-[12px] pt-[17px]">
            <T w={61} className="ml-[16px] h-[16px] leading-[16px]">Show_Laser</T>
            <Switch className="ml-[15px] -mt-px" />
            <T w={70} className="ml-[3px] mt-[9px] h-[18px] leading-[18px] font-bold text-black">Microscope</T>
            <Switch red className="ml-[14px] mt-[5px]" />
            <T w={80} className="ml-[2px] -mt-px h-[16px] leading-[16px]">Microscope off</T>
            <Led color="#ff1414" rim="#b02020" className="ml-[30px] mt-[4px] h-[20px] w-[20px]" />
          </div>
          <div className="pt-[12px]">
            <T w={59} className="ml-[19px] h-[16px] leading-[16px]">Block Laser</T>
            <div className="flex h-[31px] pt-[6px]">
              <Switch className="ml-[20px]" />
              <Check className="ml-[12px] mt-[5px]" />
              <T w={26} className="ml-[3px] mt-[5px] leading-[16px]">Auto</T>
            </div>
            <T w={108} className="ml-[12px] mt-[9px] h-[18px] leading-[18px] font-bold text-black">transmitted Light</T>
            <div className="flex h-[39px] pt-[5px]">
              <Switch className="ml-[40px]" />
              <Check className="-ml-[2px] mt-[14px]" />
              <T w={19} className="ml-[3px] mt-[14px] leading-[16px]">adv</T>
            </div>
            <T w={93} className="ml-[30px] mt-[7px] h-[18px] leading-[18px] font-bold text-black">Reflected Light</T>
            <Switch className="ml-[40px] mt-[5px]" />
          </div>
        </Panel>

        <Button className="ml-[144px] mt-[9px] h-[42px] w-[108px]">
          <T w={53} className="pt-[3px] font-['Noto_Sans','Open_Sans',sans-serif] text-[24.500px] font-bold text-[#ff0000]">Quit</T>
        </Button>

        <Panel className="mt-[9px] h-[264px] w-[252px] pl-px">
          <div className="flex h-[139px]">
            <div className="w-[160px] shrink-0 pt-[2px]">
              <TriArrow dir="up" className="ml-[67px]" />
              <div className="flex h-[45px] items-center">
                <TriArrow dir="left" className="ml-[21px]" />
                <div className="ml-[1px] flex h-[46px] w-[46px] shrink-0 flex-col items-center justify-center border border-[#333] bg-linear-to-b from-[#ffd860] to-[#f8b838] text-[12.500px] font-bold leading-[15px] text-[#4898d4] shadow-[inset_3px_3px_0_#ffe070,inset_-3px_-3px_0_#c89030]">
                  <T w={32}>Move</T>
                  <T w={14}>To</T>
                </div>
                <TriArrow dir="right" className="ml-[3px]" />
              </div>
              <TriArrow dir="down" className="ml-[67px] mt-[2px]" />
            </div>
            <div className="pt-[15px]">
              <TriArrow dir="up" className="ml-[31px]" />
              <div className="-mt-px ml-[14px] flex">
                <Spinner />
                <Field className="h-[24px] w-[47px] pl-[1px]"><T w={33}>10 um</T></Field>
              </div>
              <TriArrow dir="down" className="-mt-[2px] ml-[31px]" />
            </div>
          </div>
          <div className="-mt-[42px] flex h-[56px]">
            <Spinner className="h-[25px] w-[12px]" />
            <Field className="mt-[2px] h-[24px] w-[47px] pl-[1px]"><T w={30}>1 mm</T></Field>
          </div>
          <div className="flex h-[48px] pl-[23px]">
            <div className="w-[66px]">
              <Field className="h-[24px] w-[53px] pl-[2px]"><T w={34}>21.647</T></Field>
              <T w={40} className="ml-[5px] mt-[2px] leading-[16px]">X (mm)</T>
            </div>
            <div className="w-[96px]">
              <Field className="h-[24px] w-[53px] pl-[2px]"><T w={34}>22.244</T></Field>
              <T w={40} className="ml-[5px] mt-[2px] leading-[16px]">Y (mm)</T>
            </div>
            <div>
              <Field className="h-[24px] w-[53px] pl-[2px]"><T w={27}>3.872</T></Field>
              <T w={40} className="ml-[7px] mt-[2px] leading-[16px]">Z (mm)</T>
            </div>
          </div>
          <div className="ml-[10px] flex h-[29px]">
            <Spinner />
            <Field className="mt-px h-[24px] w-[94px] pl-0"><T w={70}>50X objective</T></Field>
          </div>
          <Field className="mt-px ml-[21px] h-[24px] w-[97px] justify-center"><T w={51}>2X -&gt; 10X</T></Field>
        </Panel>
        <div className="-ml-px mt-[1px] flex">
          <Button className="h-[20px] w-[127px]"><T w={87}>Focus on Quartz</T></Button>
          <Button className="h-[20px] w-[126px]"><T w={118}>Focus on cyclohexane</T></Button>
        </div>
      </div>

      <div className="min-w-0 flex-1 pr-[2px] pt-[9px]">
        <div className="flex h-[660px] border-b border-l border-t border-b-[#6a6a6a] border-l-[#aaa] border-t-[#c8c8c8] bg-[#b4b4b4]">
          <div className="w-[12px] shrink-0 bg-[#c8c8c8]" />
          <div className="ml-[6px] w-[774px] shrink-0 pt-[8px]">
            <div className="flex h-[624px] flex-col justify-end border-b-2 border-t-2 border-b-[#f0f0f0] border-t-[#f0f0f0] bg-[#010203]">
              <div className="mb-[28px] ml-[30px] flex h-[18px] w-[110px] flex-col items-center border-b border-[#c01818] text-[#d81818]">
                <T w={29} className="ml-[6px] leading-[16px]">25 um</T>
              </div>
            </div>
            <div className="mt-[2px] flex h-[16px] justify-between bg-[#c8c8c8]">
              <div className="flex h-[16px] w-[16px] items-center justify-center border border-b-[#888] border-l-white border-r-[#888] border-t-white bg-[#ececec]"><svg viewBox="0 0 8 8" className="h-[8px] w-[8px]"><path d="M7 1v6L0 4z" fill="#888" /></svg></div>
              <div className="flex h-[16px] w-[16px] items-center justify-center border border-b-[#888] border-l-white border-r-[#888] border-t-white bg-[#ececec]"><svg viewBox="0 0 8 8" className="h-[8px] w-[8px]"><path d="M1 1v6l7-3z" fill="#888" /></svg></div>
            </div>
          </div>
          <div className="mt-[9px] flex h-[625px] w-[16px] shrink-0 flex-col justify-end bg-[#c8c8c8]">
            <div className="flex h-[16px] w-[16px] items-center justify-center border border-b-[#888] border-l-white border-r-[#888] border-t-white bg-[#ececec]"><svg viewBox="0 0 8 8" className="h-[8px] w-[8px]"><path d="M1 1h6L4 8z" fill="#888" /></svg></div>
          </div>
          <div className="ml-auto w-[12px] border-r border-[#444] bg-linear-to-r from-[#b4b4b4] to-[#666]" />
        </div>
        <div className="flex items-start">
          <div className="ml-[2px] mt-[2px] h-[30px] w-[383px] border-[3px] border-b-[#f0f0f0] border-l-[#d0d0d0] border-r-[#f0f0f0] border-t-[#c4c4c4] bg-[#b4b4b4]">
            <div className="flex h-[24px] items-center border-[3px] border-b-[#9c9c9c] border-l-[#8c8c8c] border-r-[#9c9c9c] border-t-[#7a7a7a] bg-[#c3c3c3] pl-[5px]">
              <T w={114}>0.60X 2,4,2    (312,944)</T>
            </div>
          </div>
          <Button className="ml-[4px] mt-[4px] h-[20px] w-[104px]"><T w={92}>Remote Mapping</T></Button>
          <div className="ml-auto mr-[11px] mt-[4px] w-[74px]">
            <Button className="h-[20px] w-[74px]"><T w={63}>Snap Image</T></Button>
            <div className="flex items-center">
              <Check on />
              <T w={41} className="ml-[3px] leading-[15px]">Overlay</T>
            </div>
          </div>
        </div>
      </div>
    </div>
  </div>
);

/* ---------- local taskbar ---------- */

const Task = ({ active, open, children, className = "w-[49px]" }) => (
  <div className={"flex h-full shrink-0 flex-col items-center justify-between " + className + " " + (active ? "bg-[#5c686f]" : "")}>
    <div className="flex h-[38px] items-center pt-px">{children}</div>
    <div className={"h-[1px] " + (active ? "w-full bg-[#6aa5e0]" : open ? "w-[33px] bg-[#5c97d0]" : "w-0")} />
  </div>
);

export default function App() {
  return (
    <div className="relative flex h-[897px] w-[1437px] flex-col overflow-hidden bg-[#8fd1ed] font-['Open_Sans','Noto_Sans',sans-serif]">
      <div className="h-[96px] shrink-0 bg-[#8ed2ed]" />
      <div className="h-[704px] shrink-0 bg-[#99dbea]" />
      <div className="h-[58px] shrink-0 bg-[#8ed1ed]" />
      <div className="flex h-[39px] shrink-0 bg-[#33424a]">
        <Task className="w-[44px]"><WinLogo className="h-[15px] w-[15px]" /></Task>
        <Task className="w-[52px]"><TaskView className="h-[17px] w-[17px]" /></Task>
        <Task className="w-[50px]"><Folder className="h-[21px] w-[21px]" /></Task>
        <Task className="w-[48px] bg-[#46545c]"><Edge className="h-[24px] w-[22px]" /></Task>
        <Task><Calc className="h-[24px] w-[15px]" /></Task>
        <Task><EyeApp className="h-[24px] w-[22px]" /></Task>
        <Task><Snip className="h-[23px] w-[21px]" /></Task>
        <Task className="w-[50px]"><Excel className="h-[22px] w-[19px]" /></Task>
        <Task active className="w-[48px]"><Rdp className="h-[24px] w-[20px]" /></Task>
        <Task open><Chrome className="h-[24px] w-[22px]" /></Task>
        <Task open><Scope className="h-[24px] w-[21px]" /></Task>
        <Task open><ProbeApp className="h-[23px] w-[20px]" /></Task>
        <Task open><AnyDesk className="h-[24px] w-[24px]" /></Task>
        <div className="ml-auto mr-[4px] flex w-[54px] flex-col items-center justify-center text-[12px] leading-[18px] text-white">
          <T w={42}>8:42 PM</T>
          <T w={52}>11/3/2022</T>
        </div>
      </div>
      <StageWindow />
      <RemoteWindow />
    </div>
  );
}
